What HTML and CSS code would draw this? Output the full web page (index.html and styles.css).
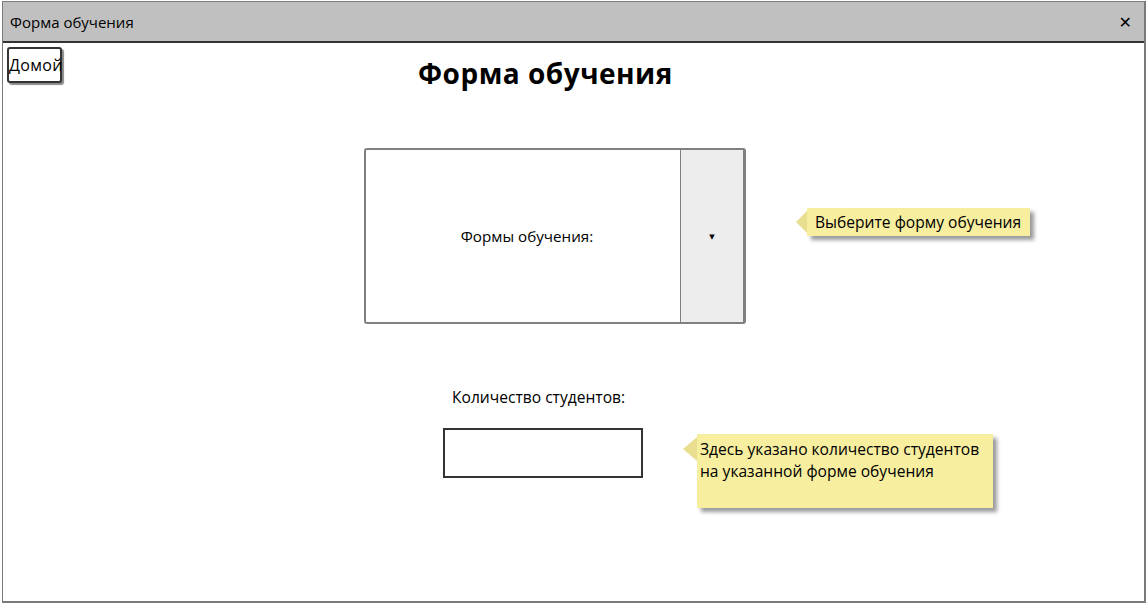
FILE: index.html
```html
<!DOCTYPE html>
<html lang="ru">
<head>
    <meta charset="UTF-8">
    <meta name="viewport" content="width=device-width, initial-scale=1.0">
    <title>Форма обучения</title>
    <link rel="stylesheet" href="styles.css">
</head>
<body>
    <div class="window">
        <div class="window-title">
            <span>Форма обучения</span>
            <span class="close">&#10005;</span>
        </div>
        <div class="window-body">
            <div class="top-row">
                <button class="home-btn">Домой</button>
                <h1>Форма обучения</h1>
            </div>
            <div class="combo-row">
                <div class="combo">
                    <div class="combo-text">Формы обучения:</div>
                    <div class="combo-btn">&#9660;</div>
                </div>
                <div class="note note-small">Выберите форму обучения</div>
            </div>
            <div class="count-label">Количество студентов:</div>
            <div class="count-row">
                <div class="count-input"></div>
                <div class="note note-big">Здесь указано количество студентов<br>на указанной форме обучения</div>
            </div>
        </div>
    </div>
</body>
</html>
```

FILE: styles.css
```css
body {
    margin: 0;
    background-color: #ffffff;
    font-family: "Open Sans", "DejaVu Sans", sans-serif;
    color: #000000;
}
.window {
    box-sizing: border-box;
    width: 1144px;
    height: 602px;
    margin: 1px 0 0 2px;
    border: 1px solid #7a7a7a;
    border-right: 2px solid #7a7a7a; /* slightly heavier right edge */
    border-bottom: 2px solid #7a7a7a;
    overflow: hidden;
}
.window-title {
    height: 39px;
    background-color: #c0c0c0;
    border-bottom: 2px solid #333333;
    display: flex;
    align-items: center;
    justify-content: space-between;
    padding: 0 12px 0 7px;
    font-size: 15px;
}
.close {
    font-size: 16px;
    font-weight: bold;
}
.top-row {
    display: flex;
    align-items: flex-start;
    padding: 4px 0 0 4px;
}
.home-btn {
    width: 55px;
    height: 36px;
    padding: 0;
    text-align: left;
    font-family: inherit;
    font-size: 16px;
    letter-spacing: 0.3px;
    background-color: #ffffff;
    border: 2px solid #333333;
    border-radius: 3px;
    box-shadow: 2px 2px 1px #8a8a8a;
    color: #000000;
}
h1 {
    margin: 8px 0 0 356px;
    font-size: 28px;
    font-weight: bold;
    letter-spacing: 0.5px;
    line-height: 36px;
}
.combo-row {
    display: flex;
    align-items: center;
    margin: 57px 0 0 361px;
}
.combo {
    box-sizing: border-box;
    width: 382px;
    height: 176px;
    display: flex;
    border: 2px solid #808080;
    border-right-width: 3px;
    border-radius: 3px;
}
.combo-text {
    flex: 1;
    display: flex;
    align-items: center;
    justify-content: center;
    font-size: 15.2px;
    padding-left: 8px;
}
.combo-btn {
    width: 62px;
    background-color: #ededed;
    border-left: 1px solid #808080;
    display: flex;
    align-items: center;
    justify-content: center;
    font-size: 7px;
}
.note {
    position: relative;
    background-color: #f7ee9f;
    box-shadow: 4px 4px 4px #9a9a9a;
    font-size: 15.6px;
}
.note::before {
    content: "";
    position: absolute;
    left: -11px;
    border-style: solid;
    border-color: transparent #e9dd8f transparent transparent;
}
.note-small {
    margin: 0 0 28px 61px;
    height: 28px;
    line-height: 28px;
    padding: 0 9px 0 8px;
}
.note-small::before {
    top: 3px;
    border-width: 11px 11px 11px 0;
}
.count-label {
    margin: 61px 0 0 449px;
    font-size: 15.6px;
    line-height: 24px;
}
.count-row {
    display: flex;
    align-items: flex-start;
    margin: 19px 0 0 440px;
}
.count-input {
    box-sizing: border-box;
    width: 200px;
    height: 50px;
    border: 2px solid #333333;
}
.note-big {
    margin: 6px 0 0 54px;
    width: 296px;
    height: 74px;
    padding: 4px 0 0 3px;
    box-sizing: border-box;
    line-height: 22px;
}
.note-big::before {
    top: 3px;
    border-width: 12px 14px 12px 0;
    left: -14px;
}
```
